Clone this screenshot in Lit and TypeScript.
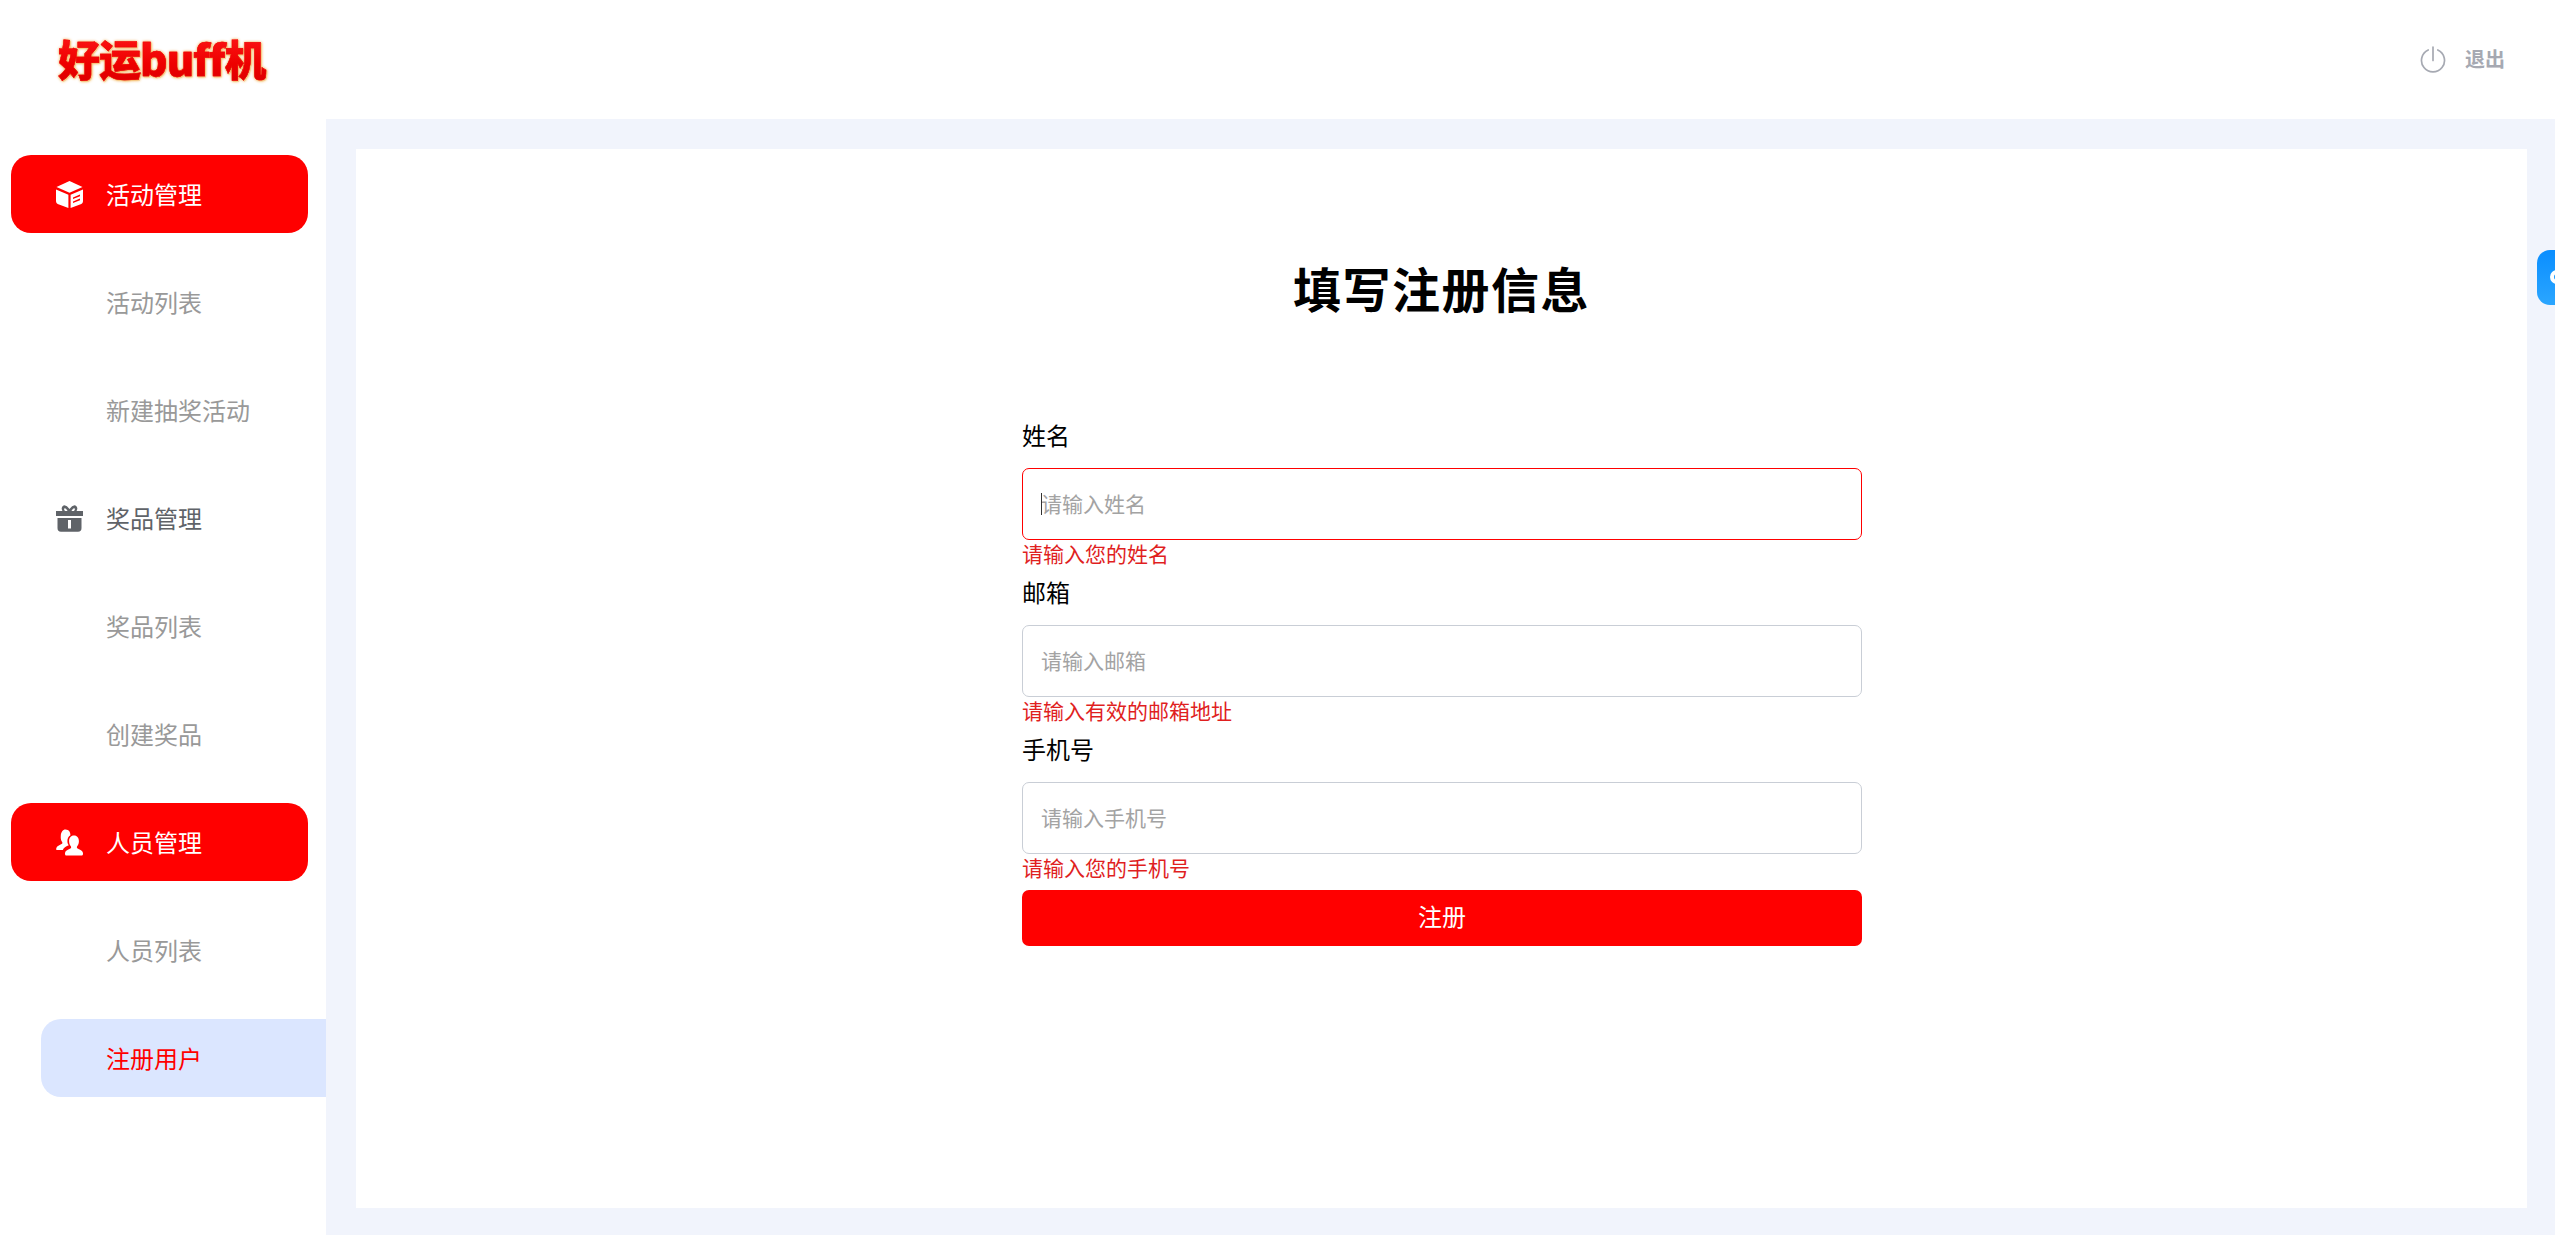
import {html, css, LitElement, svg} from 'lit';
import {customElement} from 'lit/decorators.js';
import {classMap} from 'lit/directives/class-map.js';

const boxIcon = svg`<path d="M13.5 0 L26.5 6 L13.5 11.8 L0.5 6 Z"/><path d="M0 8.4 L12.4 13.8 V27 L3 23.6 Q0 22.6 0 20 Z"/><path fill-rule="evenodd" d="M27 8.4 V20 Q27 22.6 24 23.6 L14.6 27 V13.8 Z M17 16.4 V18 L24 15.2 V13.6 Z M17 20.4 V22 L24 19.2 V17.6 Z"/>`;
const giftIcon = svg`<path d="M7.5 0.5 Q10.5 -0.3 13.5 4 Q16.5 -0.3 19.5 0.5 Q22.5 2 20.6 6 H27 V11 H0 V6 H6.4 Q4.5 2 7.5 0.5 Z M8.6 3.2 Q7.4 4.2 9 6 H11.6 Q10 2.8 8.6 3.2 Z M18.4 3.2 Q17 2.8 15.4 6 H18 Q19.6 4.2 18.4 3.2 Z"/><path fill-rule="evenodd" d="M1.5 13 H25.5 V23 Q25.5 26.8 22 26.8 H5 Q1.5 26.8 1.5 23 Z M12 15 V23.5 H15 V15 Z"/>`;
const peopleIcon = svg`<path d="M9.5 0.5 C13 0.5 14.6 3.4 14.4 6.2 C12.4 7.4 11.2 9.6 11.4 12.4 C11.5 14 12 15.2 12.8 16.2 C10.4 17 7.8 18.4 6.8 21 H0.8 C0 21 0 20 0.4 19 C1.4 16.6 5.2 15.8 6.2 14.6 C6.6 14 6.4 13.2 5.8 12.4 C4.8 11 4.6 8.6 4.8 6.4 C5 3.2 6.8 0.5 9.5 0.5 Z"/><path d="M18 6.5 C21.4 6.5 23 9.4 22.9 12.4 C22.8 14.4 22.2 16 21.2 17.2 C20.6 18 20.8 19 21.6 19.6 C23 20.6 26.2 21.2 26.9 23.8 C27.3 25.4 26.6 26.6 25.4 26.6 H10.6 C9.4 26.6 8.7 25.4 9.1 23.8 C9.8 21.2 13 20.6 14.4 19.6 C15.2 19 15.4 18 14.8 17.2 C13.8 16 13.2 14.4 13.1 12.4 C13 9.4 14.6 6.5 18 6.5 Z"/>`;

const menu = [
  {label: '活动管理', icon: boxIcon, kind: 'head', active: true},
  {label: '活动列表', kind: 'sub'},
  {label: '新建抽奖活动', kind: 'sub'},
  {label: '奖品管理', icon: giftIcon, kind: 'head'},
  {label: '奖品列表', kind: 'sub'},
  {label: '创建奖品', kind: 'sub'},
  {label: '人员管理', icon: peopleIcon, kind: 'head', active: true},
  {label: '人员列表', kind: 'sub'},
  {label: '注册用户', kind: 'sub', current: true},
];

const fields = [
  {label: '姓名', hint: '请输入姓名', error: '请输入您的姓名', focused: true},
  {label: '邮箱', hint: '请输入邮箱', error: '请输入有效的邮箱地址'},
  {label: '手机号', hint: '请输入手机号', error: '请输入您的手机号'},
];

@customElement('app-root')
export class AppRoot extends LitElement {

  static styles = css`
    :host {
      display: block;
      width: 100%;
      height: 1235px;
      position: relative;
      overflow: hidden;
      background: #fff;
      font-family: "Noto Sans CJK SC", "Noto Sans", sans-serif;
    }

    .top {
      height: 119px;
      display: flex;
      align-items: center;
      justify-content: space-between;
      padding: 0 50px 0 58px;
      box-sizing: border-box;
    }

    .logo {
      font-size: 42px;
      font-weight: 900;
      line-height: 56px;
      margin-bottom: 4px;
      letter-spacing: -1px;
      background: linear-gradient(180deg, #ff1a1a 0%, #ee0000 60%, #d80000 100%);
      -webkit-background-clip: text;
      background-clip: text;
      -webkit-text-fill-color: transparent;
      -webkit-text-stroke: 0.4px #ee0808;
      filter: drop-shadow(0 0 1.5px #f0a850) drop-shadow(1px 1px 0.5px #f8d9a0);
    }

    .logout {
      display: flex;
      align-items: center;
      gap: 19px;
      font-size: 20px;
      font-weight: 700;
      color: #a6a9b2;
    }

    .logout span {
      padding-bottom: 2px;
    }

    .logout svg {
      width: 26px;
      height: 28px;
      fill: none;
      stroke: #a6a9b2;
      stroke-width: 1.7;
      stroke-linecap: round;
    }

    .body {
      display: flex;
      height: 1116px;
    }

    .side {
      width: 326px;
      flex: none;
      padding-top: 36px;
      box-sizing: border-box;
      display: flex;
      flex-direction: column;
      gap: 30px;
    }

    .item {
      height: 78px;
      display: flex;
      align-items: center;
      font-size: 24px;
      border-radius: 20px;
      box-sizing: border-box;
    }

    .item span {
      padding-bottom: 2px;
    }

    .item svg {
      width: 27px;
      height: 27px;
      margin-right: 23px;
      fill: currentColor;
    }

    .head {
      margin: 0 18px 0 11px;
      padding-left: 45px;
      color: #5f6368;
    }

    .head.active {
      background: #ff0000;
      color: #fff;
    }

    .sub {
      margin-left: 41px;
      padding-left: 65px;
      color: #999;
    }

    .sub.current {
      background: #dbe6ff;
      color: #ff0000;
      border-radius: 20px 0 0 20px;
    }

    .main {
      flex: 1;
      background: #f1f4fc;
      padding: 30px 28px 27px 30px;
      box-sizing: border-box;
      display: flex;
    }

    .card {
      flex: 1;
      background: #fff;
      padding-top: 103px;
      display: flex;
      flex-direction: column;
      align-items: center;
    }

    h1 {
      margin: 0 0 96px;
      font-size: 48px;
      line-height: 70px;
      font-weight: 700;
      letter-spacing: 1.5px;
      color: #000;
    }

    form {
      width: 840px;
      margin-left: 1px;
      display: flex;
      flex-direction: column;
    }

    .field {
      display: flex;
      flex-direction: column;
      margin-bottom: 5px;
    }

    label {
      font-size: 24px;
      line-height: 34px;
      height: 34px;
      margin-bottom: 16px;
      color: #000;
    }

    .box {
      position: relative;
      display: flex;
    }

    input {
      width: 100%;
      height: 72px;
      padding: 0 18px 3px;
      box-sizing: border-box;
      border: 1px solid #c9ced6;
      border-radius: 7px;
      outline: none;
      font: inherit;
      font-size: 21px;
      background: #fff;
    }

    input::placeholder {
      color: #a3a3a3;
      opacity: 1;
    }

    input.bad {
      border-color: #ff0000;
    }

    .caret {
      position: absolute;
      left: 19px;
      top: 25px;
      width: 1px;
      height: 22px;
      background: #333;
    }

    .err {
      font-size: 21px;
      line-height: 26px;
      height: 30px;
      color: #e01f1f;
    }

    button {
      height: 56px;
      margin-top: 1px;
      padding: 0 0 5px;
      border: 0;
      border-radius: 7px;
      background: #ff0000;
      color: #fff;
      font: inherit;
      font-size: 24px;
    }

    .tab {
      position: absolute;
      right: -1px;
      top: 250px;
      width: 19px;
      height: 55px;
      overflow: hidden;
      border-radius: 13px 0 0 13px;
      background: linear-gradient(180deg, #0a8eff, #2ba6ff);
    }

    .tab i {
      position: absolute;
      left: 13px;
      top: 20px;
      width: 14px;
      height: 14px;
      box-sizing: border-box;
      border: 4px solid #fff;
      border-radius: 50%;
    }
  `;

  render() {
    return html`
      <header class="top">
        <div class="logo">好运buff机</div>
        <div class="logout">
          <svg viewBox="0 0 26 28"><path d="M13 1 V14.5"/><path d="M8.2 4 A11.5 11.5 0 1 0 17.8 4"/></svg>
          <span>退出</span>
        </div>
      </header>
      <div class="body">
        <nav class="side">
          ${menu.map((m) => html`
            <div class=${classMap({item: true, head: m.kind === 'head', sub: m.kind === 'sub', active: !!m.active, current: !!m.current})}>
              ${m.icon ? html`<svg viewBox="0 0 27 27">${m.icon}</svg>` : ''}
              <span>${m.label}</span>
            </div>
          `)}
        </nav>
        <main class="main">
          <section class="card">
            <h1>填写注册信息</h1>
            <form>
              ${fields.map((f) => html`
                <div class="field">
                  <label>${f.label}</label>
                  <div class="box">
                    <input class=${classMap({bad: !!f.focused})} placeholder=${f.hint}>
                    ${f.focused ? html`<span class="caret"></span>` : ''}
                  </div>
                  <div class="err">${f.error}</div>
                </div>
              `)}
              <button type="button">注册</button>
            </form>
          </section>
        </main>
      </div>
      <div class="tab"><i></i></div>
    `;
  }

}
